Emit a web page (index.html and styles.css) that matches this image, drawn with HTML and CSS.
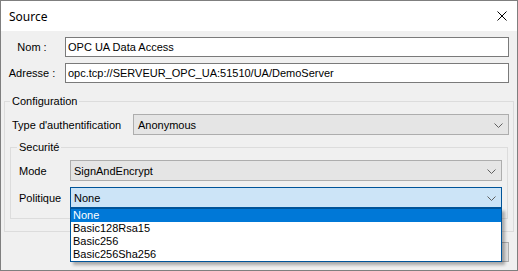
FILE: index.html
```html
<!DOCTYPE html>
<html lang="fr">
<head>
    <meta charset="UTF-8">
    <title>Source</title>
    <link rel="stylesheet" href="styles.css">
</head>
<body>
<div class="window">
    <div class="title-bar">
        <span class="title">Source</span>
        <svg class="close" width="10" height="10" viewBox="0 0 10 10">
            <path d="M0.5 0.5 L9.5 9.5 M9.5 0.5 L0.5 9.5" stroke="#000" stroke-width="1" fill="none"/>
        </svg>
    </div>
    <div class="dialog">
        <div class="field">
            <span class="field-label">Nom :</span>
            <div class="textbox">OPC UA Data Access</div>
        </div>
        <div class="field">
            <span class="field-label">Adresse :</span>
            <div class="textbox">opc.tcp://SERVEUR_OPC_UA:51510/UA/DemoServer</div>
        </div>

        <fieldset class="group config-group">
            <legend>Configuration</legend>
            <div class="row auth-row">
                <span class="row-label auth-label">Type d'authentification</span>
                <div class="combo">
                    <span>Anonymous</span>
                    <svg class="chevron" width="9" height="5" viewBox="0 0 9 5">
                        <path d="M0.5 0.5 L4.5 4.5 L8.5 0.5" stroke="#606060" stroke-width="1" fill="none"/>
                    </svg>
                </div>
            </div>

            <fieldset class="group security-group">
                <legend>Securité</legend>
                <div class="row sec-row">
                    <span class="row-label sec-label">Mode</span>
                    <div class="combo">
                        <span>SignAndEncrypt</span>
                        <svg class="chevron" width="9" height="5" viewBox="0 0 9 5">
                            <path d="M0.5 0.5 L4.5 4.5 L8.5 0.5" stroke="#606060" stroke-width="1" fill="none"/>
                        </svg>
                    </div>
                </div>
                <div class="row sec-row policy-row">
                    <span class="row-label sec-label">Politique</span>
                    <div class="combo-wrap">
                        <div class="combo focused">
                            <span>None</span>
                            <svg class="chevron" width="9" height="5" viewBox="0 0 9 5">
                                <path d="M0.5 0.5 L4.5 4.5 L8.5 0.5" stroke="#606060" stroke-width="1" fill="none"/>
                            </svg>
                        </div>
                        <ul class="dropdown">
                            <li class="selected">None</li>
                            <li>Basic128Rsa15</li>
                            <li>Basic256</li>
                            <li>Basic256Sha256</li>
                        </ul>
                    </div>
                </div>
            </fieldset>
        </fieldset>

        <div class="buttons">
            <div class="button default">OK</div>
            <div class="button cancel">Annuler</div>
        </div>
    </div>
</div>
</body>
</html>
```

FILE: styles.css
```css
body {
    margin: 0;
    background: #ffffff;
    font-family: "Liberation Sans", Arial, sans-serif;
    font-size: 11px;
    color: #000000;
}

.window {
    width: 518px;
    height: 271px;
    box-sizing: border-box;
    border: 1px solid #7f7f7f;
    display: flex;
    flex-direction: column;
}

.title-bar {
    height: 30px;
    flex: none;
    background: #ffffff;
    display: flex;
    align-items: center;
    justify-content: space-between;
}

.title {
    margin-left: 8px;
    font-family: "Segoe UI", "Noto Sans", sans-serif;
    font-size: 12px;
}

.close {
    margin-right: 10px;
    margin-top: 0;
}

.dialog {
    flex: 1;
    background: #f0f0f0;
    display: flex;
    flex-direction: column;
}

.field {
    display: flex;
    align-items: center;
    margin: 6px 8px 0 4px;
}

.field-label {
    width: 54px;
    margin-right: 6px;
    text-align: center;
}

.textbox {
    flex: 1;
    height: 20px;
    box-sizing: border-box;
    border: 1px solid #7a7a7a;
    background: #ffffff;
    padding: 0 2px;
    line-height: 18px;
    white-space: nowrap;
}

.group {
    margin: 0;
    padding: 0;
    min-width: 0;
    border: 1px solid #dcdcdc;
}

.group legend {
    padding: 0 2px;
    line-height: 13px;
}

.config-group {
    margin: 12px 3px 0 3px;
}

.config-group > legend {
    margin-left: 5px;
}

.security-group {
    margin: 6px 5px 12px 5px;
}

.security-group > legend {
    margin-left: 6px;
}

.row {
    display: flex;
    align-items: center;
}

.auth-row {
    margin: 6px 4px 0 7px;
}

.auth-label {
    width: 121px;
}

.sec-row {
    margin: 6px 5px 0 8px;
}

.policy-row {
    margin-bottom: 10px;
}

.sec-label {
    width: 51px;
}

.combo-wrap {
    flex: 1;
    position: relative;
}

.combo {
    flex: 1;
    height: 21px;
    box-sizing: border-box;
    border: 1px solid #adadad;
    background: #e5e5e5;
    display: flex;
    align-items: center;
    justify-content: space-between;
    padding: 0 5px 0 3px;
}

.auth-row .combo {
    padding-left: 4px;
}

.combo.focused {
    background: #cce4f7;
    border-color: #005499;
}

.chevron {
    margin-top: 1px;
}

.dropdown {
    position: absolute;
    top: 100%;
    left: 0;
    right: 0;
    margin: 0;
    padding: 0;
    list-style: none;
    background: #ffffff;
    border: 1px solid #005499;
    box-shadow: 3px 3px 3px rgba(0, 0, 0, 0.3);
    z-index: 2;
}

.dropdown li {
    height: 13px;
    line-height: 13px;
    padding-left: 2px;
    white-space: nowrap;
}

.dropdown li.selected {
    background: #0078d7;
    color: #ffffff;
}

.buttons {
    display: flex;
    justify-content: flex-end;
    gap: 8px;
    margin: 10px 8px 0 0;
}

.button {
    height: 20px;
    box-sizing: border-box;
    border: 1px solid #adadad;
    background: #e1e1e1;
    text-align: center;
    line-height: 18px;
}

.button.default {
    width: 73px;
    border: 1px solid #0078d7;
}

.button.cancel {
    width: 72px;
}
```
